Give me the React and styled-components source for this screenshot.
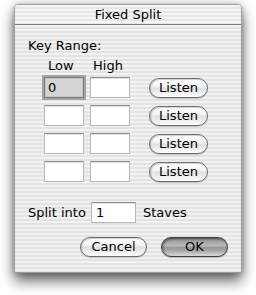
import React from "react";
import styled, { createGlobalStyle } from "styled-components";

const Global = createGlobalStyle`
  html, body { margin: 0; padding: 0; background: #ffffff; }
  body { font-family: "DejaVu Sans", "Liberation Sans", sans-serif; font-size: 13px; color: #000; }
`;

const stripes = `repeating-linear-gradient(to bottom, #f2f2f2 0px, #f2f2f2 2px, #e3e3e3 2px, #e3e3e3 4px)`;

const Page = styled.div`
  width: 256px;
  height: 295px;
  padding: 4px 0 0 14px;
  box-sizing: border-box;
`;

const Window = styled.div`
  width: 228px;
  height: 269px;
  box-sizing: border-box;
  border: 1px solid #9c9c9c;
  border-radius: 4px 4px 0 0;
  background: ${stripes};
  box-shadow: 0 8px 14px rgba(0, 0, 0, 0.6), 0 0 6px rgba(0, 0, 0, 0.25);
  display: flex;
  flex-direction: column;
  overflow: hidden;
`;

const TitleBar = styled.div`
  height: 19px;
  border-bottom: 1px solid #7a7a7a;
  background: repeating-linear-gradient(to bottom, #f7f7f7 0px, #f7f7f7 2px, #e6e6e6 2px, #e6e6e6 4px);
  display: flex;
  align-items: center;
  justify-content: center;
  font-size: 13px;
  line-height: 16px;
`;

const Content = styled.div`
  padding: 13px 13px 0 12px;
  display: flex;
  flex-direction: column;
`;

const Label = styled.div`
  line-height: 16px;
  height: 16px;
  margin-left: ${(p) => p.$ml || 0}px;
  white-space: nowrap;
`;

const Grid = styled.div`
  display: grid;
  grid-template-columns: 40px 40px 59px;
  column-gap: 6px;
  row-gap: 7px;
  margin-left: 17px;
  align-items: center;
`;

const HeaderRow = styled.div`
  display: grid;
  grid-template-columns: 40px 40px;
  column-gap: 6px;
  margin-left: 17px;
  margin-top: 4px;
  margin-bottom: 3px;
`;

const ColLabel = styled.div`
  line-height: 16px;
  padding-left: ${(p) => p.$pl}px;
`;

const Field = styled.div`
  box-sizing: border-box;
  width: ${(p) => p.$w || 40}px;
  height: 21px;
  background: #ffffff;
  border: 1px solid #b8b8b8;
  border-top-color: #8e8e8e;
  box-shadow: inset 0 1px 0 #e4e4e4;
  line-height: 19px;
  padding-left: 4px;
  font-size: 13px;
`;

const FocusField = styled(Field)`
  background: #d4d4d4;
  border: 1px solid #7a7a7a;
  box-shadow: 0 0 0 2px #a4a4a4, inset 0 0 0 1px #c6c6c6;
  padding-left: 3px;
`;

const Pill = styled.button`
  box-sizing: border-box;
  width: ${(p) => p.$w}px;
  height: 20px;
  padding: 0;
  border-radius: 10px;
  font-family: "DejaVu Sans", "Liberation Sans", sans-serif;
  font-size: 13px;
  line-height: 18px;
  color: #000;
  border: 1px solid ${(p) => (p.$default ? "#3e3e3e" : "#6c6c6c")};
  background: ${(p) =>
    p.$default
      ? "linear-gradient(to bottom, #7e7e7e 0%, #a4a4a4 20%, #bbbbbb 45%, #969696 52%, #a6a6a6 70%, #dadada 100%)"
      : "linear-gradient(to bottom, #ffffff 0%, #f4f4f4 40%, #e0e0e0 52%, #ececec 72%, #ffffff 100%)"};
  box-shadow: ${(p) =>
    p.$default
      ? "inset 1px 1px 2px rgba(0,0,0,0.4), 0 1px 1px rgba(0,0,0,0.25)"
      : "inset 1px 1px 1px rgba(0,0,0,0.18), 0 1px 1px rgba(0,0,0,0.18)"};
`;

const ListenPill = styled(Pill)`
  margin-left: 13px;
`;

const SplitRow = styled.div`
  display: grid;
  grid-template-columns: 63px 45px auto;
  align-items: center;
  margin-top: 20px;
  margin-left: 1px;
`;

const StavesLabel = styled(Label)`
  margin-left: 7px;
`;

const ButtonRow = styled.div`
  display: flex;
  justify-content: flex-end;
  gap: 14px;
  margin-top: 14px;
`;

export default function App() {
  const rows = [0, 1, 2, 3];
  return (
    <>
      <Global />
      <Page>
        <Window>
          <TitleBar>Fixed Split</TitleBar>
          <Content>
            <Label $ml={1}>Key Range:</Label>
            <HeaderRow>
              <ColLabel $pl={4}>Low</ColLabel>
              <ColLabel $pl={3}>High</ColLabel>
            </HeaderRow>
            <Grid>
              {rows.map((r) => (
                <React.Fragment key={r}>
                  {r === 0 ? <FocusField>0</FocusField> : <Field />}
                  <Field />
                  <ListenPill $w={59}>Listen</ListenPill>
                </React.Fragment>
              ))}
            </Grid>
            <SplitRow>
              <Label>Split into</Label>
              <Field $w={45}>1</Field>
              <StavesLabel>Staves</StavesLabel>
            </SplitRow>
            <ButtonRow>
              <Pill $w={67}>Cancel</Pill>
              <Pill $w={67} $default>OK</Pill>
            </ButtonRow>
          </Content>
        </Window>
      </Page>
    </>
  );
}
